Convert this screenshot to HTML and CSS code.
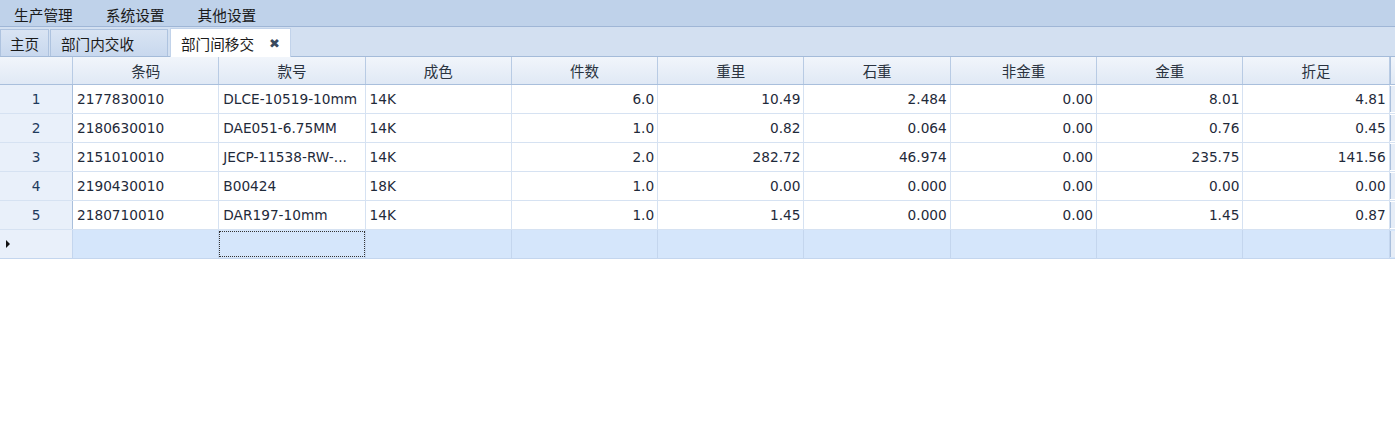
FILE: index.html
```html
<!DOCTYPE html>
<html>
<head>
<meta charset="utf-8">
<link rel="stylesheet" href="styles.css">
</head>
<body>
<div class="menubar">
  <span class="menu-item">生产管理</span>
  <span class="menu-item">系统设置</span>
  <span class="menu-item">其他设置</span>
</div>
<div class="tabbar">
  <div class="tab tab-home">主页</div>
  <div class="tab tab-recv">部门内交收</div>
  <div class="tab tab-active">部门间移交<span class="close">✖</span></div>
</div>
<div class="grid">
  <div class="row head">
    <div class="c rh"></div>
    <div class="c">条码</div><div class="c">款号</div><div class="c">成色</div><div class="c">件数</div><div class="c">重里</div><div class="c">石重</div><div class="c">非金重</div><div class="c">金重</div><div class="c">折足</div>
    <div class="sb"></div>
  </div>
  <div class="row">
    <div class="c rh">1</div>
    <div class="c l">2177830010</div><div class="c l">DLCE-10519-10mm</div><div class="c l">14K</div><div class="c r">6.0</div><div class="c r">10.49</div><div class="c r">2.484</div><div class="c r">0.00</div><div class="c r">8.01</div><div class="c r">4.81</div>
    <div class="sb"></div>
  </div>
  <div class="row">
    <div class="c rh">2</div>
    <div class="c l">2180630010</div><div class="c l">DAE051-6.75MM</div><div class="c l">14K</div><div class="c r">1.0</div><div class="c r">0.82</div><div class="c r">0.064</div><div class="c r">0.00</div><div class="c r">0.76</div><div class="c r">0.45</div>
    <div class="sb"></div>
  </div>
  <div class="row">
    <div class="c rh">3</div>
    <div class="c l">2151010010</div><div class="c l">JECP-11538-RW-...</div><div class="c l">14K</div><div class="c r">2.0</div><div class="c r">282.72</div><div class="c r">46.974</div><div class="c r">0.00</div><div class="c r">235.75</div><div class="c r">141.56</div>
    <div class="sb"></div>
  </div>
  <div class="row">
    <div class="c rh">4</div>
    <div class="c l">2190430010</div><div class="c l">B00424</div><div class="c l">18K</div><div class="c r">1.0</div><div class="c r">0.00</div><div class="c r">0.000</div><div class="c r">0.00</div><div class="c r">0.00</div><div class="c r">0.00</div>
    <div class="sb"></div>
  </div>
  <div class="row">
    <div class="c rh">5</div>
    <div class="c l">2180710010</div><div class="c l">DAR197-10mm</div><div class="c l">14K</div><div class="c r">1.0</div><div class="c r">1.45</div><div class="c r">0.000</div><div class="c r">0.00</div><div class="c r">1.45</div><div class="c r">0.87</div>
    <div class="sb"></div>
  </div>
  <div class="row newrow">
    <div class="c rh arrow"><span class="tri"></span></div>
    <div class="c"></div><div class="c"><span class="focus"></span></div><div class="c"></div><div class="c"></div><div class="c"></div><div class="c"></div><div class="c"></div><div class="c"></div><div class="c"></div>
    <div class="sb"></div>
  </div>
</div>
</body>
</html>
```

FILE: styles.css
```css
html, body {
  margin: 0;
  padding: 0;
  background: #ffffff;
}
body {
  width: 1395px;
  height: 437px;
  overflow: hidden;
  font-family: Tahoma, "DejaVu Sans", "Noto Sans CJK SC", sans-serif;
  font-size: 13.7px;
  color: #1f2a3a;
}
.menubar {
  height: 27px;
  background: #bfd2ea;
  border-bottom: 1px solid #9fb6d6;
  display: flex;
  align-items: center;
  padding-left: 14px;
  gap: 33px;
  font-family: "Noto Sans CJK SC", sans-serif;
  font-size: 14.7px;
  color: #1a1a1a;
  box-sizing: border-box;
  padding-top: 2px;
}
.tabbar {
  height: 30px;
  background: #d3e0f1;
  border-bottom: 1px solid #a4bbd9;
  box-sizing: border-box;
  display: flex;
  align-items: flex-end;
  padding-top: 2px;
  font-family: "Noto Sans CJK SC", sans-serif;
  font-size: 14.6px;
}
.tab {
  height: 27px;
  display: flex;
  align-items: center;
  box-sizing: border-box;
  color: #1a1a1a;
  background: linear-gradient(#d9e4f3, #c8d8ee);
  border: 1px solid #aec3df;
  border-bottom: none;
}
.tab-home {
  width: 49px;
  padding-left: 9px;
}
.tab-recv {
  width: 118px;
  margin-left: 1px;
  padding-left: 10px;
}
.tab-active {
  width: 121px;
  margin-left: 2px;
  height: 29px;
  margin-bottom: -1px;
  background: #ffffff;
  padding-left: 10px;
  border-color: #c2d3ea;
}
.close {
  margin-left: 15px;
  font-family: "DejaVu Sans", sans-serif;
  font-size: 13px;
  color: #3a4a5e;
}
.grid {
  display: flex;
  flex-direction: column;
}
.row {
  display: flex;
  height: 29px;
  box-sizing: border-box;
  border-bottom: 1px solid #d6e2f2;
}
.row.head {
  height: 28px;
  border-bottom: 1px solid #a9bfdc;
  background: linear-gradient(#f1f5fb, #e0e9f5);
}
.c {
  width: 146.3px;
  flex: none;
  box-sizing: border-box;
  border-right: 1px solid #d6e2f2;
  display: flex;
  align-items: center;
  padding: 0 5px;
  white-space: nowrap;
  overflow: hidden;
}
.head .c {
  justify-content: center;
  border-right: 1px solid #b8cbe4;
  font-family: "Noto Sans CJK SC", sans-serif;
  font-size: 14.5px;
  color: #2a3340;
}
.c.rh {
  width: 73px;
  background: #e9f0fa;
  border-right: 1px solid #a9bfdc;
  justify-content: center;
  color: #1e3a5c;
}
.head .c.rh {
  background: transparent;
  border-right: 1px solid #b8cbe4;
}
.c.l {
  justify-content: flex-start;
  padding-left: 4px;
}
.c.r {
  justify-content: flex-end;
  padding-right: 3px;
}
.sb {
  flex: 1;
  border-left: 1px solid #a9bfdc;
  background: #e6edf7;
  margin: 1px 0;
}
.head .sb {
  background: linear-gradient(#f1f5fb, #e0e9f5);
  margin: 0;
}
.newrow {
  background: #d5e6fb;
  border-bottom: 1px solid #c4d6ee;
}
.newrow .c {
  border-right-color: #c4d6ee;
}
.arrow {
  justify-content: flex-start !important;
  padding-left: 6px;
}
.tri {
  width: 0;
  height: 0;
  border-top: 4px solid transparent;
  border-bottom: 4px solid transparent;
  border-left: 4px solid #111111;
}
.c .focus {
  display: block;
  flex: 1;
  align-self: stretch;
  margin: 1px -5px 1px -5px;
  border: 1px dotted #333333;
}
```
